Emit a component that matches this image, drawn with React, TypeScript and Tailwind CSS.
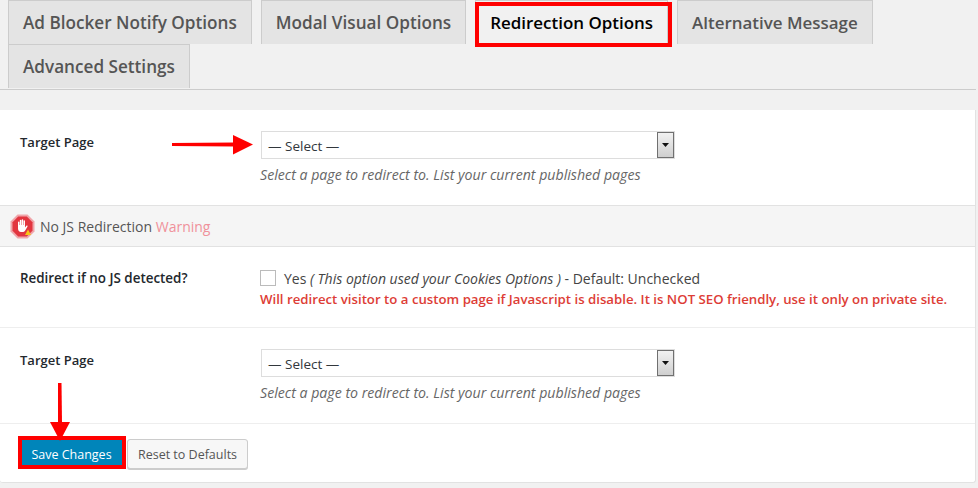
const SelectBox = () => (
  <div className="flex h-[28px] w-[414px] items-center justify-between border border-[#ddd] bg-white pl-[6px]">
    <span className="pt-[3px] text-[13.5px] text-[#32373c]">— Select —</span>
    <div className="flex h-[26px] w-[17px] items-center justify-center border border-[#707070] bg-gradient-to-b from-[#f2f2f2] to-[#cfcfcf]">
      <svg width="7" height="4" viewBox="0 0 7 4">
        <path d="M0 0h7L3.5 4z" fill="#111" />
      </svg>
    </div>
  </div>
);

const Tab = ({ label, className }: { label: string; className: string }) => (
  <div className={"ml-[9px] flex h-[44px] items-center border border-b-0 border-[#ccc] px-[14px] pt-[1px] font-semibold " + className}>
    {label}
  </div>
);

const StopIcon = () => (
  <svg width="25" height="25" viewBox="0 0 25 25">
    <path d="M7.500 0.500h10l7 7v10l-7 7h-10l-7-7v-10z" fill="#f0a5aa" />
    <path d="M8.200 2.500h8.600l5.700 5.700v8.600l-5.700 5.700H8.200l-5.700-5.700V8.200z" fill="#e2353f" />
    <path
      d="M8 12V8.200c0-1 1.400-1 1.400 0V11h.4V6.600c0-1 1.500-1 1.500 0V11h.4V6c0-1 1.500-1 1.500 0v5h.4V7c0-1 1.400-1 1.400 0v6.500l1.200-1.600c.7-.8 1.800 0 1.200.9l-2.200 3.600c-.7 1.100-1.500 1.700-3 1.700h-1.200C9.300 18.100 8 16.500 8 14.500z"
      fill="#fff"
    />
    <path d="M18 15.500l3 5.500h-6z" fill="#f5c518" />
  </svg>
);

export default function App() {
  return (
    <div className="relative h-[488px] w-[978px] overflow-hidden bg-[#f1f1f1] font-['Open_Sans',sans-serif] text-[14px] text-[#444]">
      {/* tabs */}
      <div className="mr-[2px] h-[90px] border-b border-[#ccc]">
        <div className="-ml-px flex h-[44px]">
          <Tab label="Ad Blocker Notify Options" className="bg-[#e4e4e4] text-[17.15px] text-[#555]" />
          <Tab label="Modal Visual Options" className="bg-[#e4e4e4] text-[17.15px] text-[#555]" />
          <Tab label="Redirection Options" className="bg-[#f1f1f1] text-[16.95px] text-black" />
          <Tab label="Alternative Message" className="bg-[#e4e4e4] text-[16.95px] text-[#555]" />
        </div>
        <div className="-ml-px flex h-[45px]">
          <Tab label="Advanced Settings" className="bg-[#e4e4e4] text-[17.15px] text-[#555]" />
        </div>
      </div>

      {/* panel */}
      <div className="mr-[2px] mt-[20px] rounded-b-[3px] border-b border-r border-[#e2e2e2] bg-white">
        <div className="flex h-[95px] pl-[20px] pt-[21px]">
          <div className="w-[241px] pt-[2px] text-[13px] font-semibold leading-[18px] text-[#23282d]">Target Page</div>
          <div>
            <SelectBox />
            <p className="-ml-px mt-[6px] text-[14.15px] italic leading-[20px] text-[#666]">
              Select a page to redirect to. List your current published pages
            </p>
          </div>
        </div>

        <div className="flex h-[42px] items-center gap-[5px] border-y border-[#e2e2e2] bg-[#f5f5f5] pl-[10px] text-[#555]">
          <StopIcon />
          <span className="pt-[1px]">
            No JS Redirection <span className="text-[#f0919a]">Warning</span>
          </span>
        </div>

        <div className="flex h-[80px] pl-[20px] pt-[21px]">
          <div className="w-[240px] text-[13.4px] font-semibold leading-[20px] text-[#23282d]">Redirect if no JS detected?</div>
          <div>
            <div className="flex h-[20px] items-center">
              <div className="h-[16px] w-[16px] border border-[#bbb] bg-white" />
              <span className="ml-[8px] text-[#444]">
                Yes <em>( This option used your Cookies Options )</em> - Default: Unchecked
              </span>
            </div>
            <p className="text-[13.23px] font-semibold leading-[22px] text-[#dd3d36]">
              Will redirect visitor to a custom page if Javascript is disable. It is NOT SEO friendly, use it only on private site.
            </p>
          </div>
        </div>

        <div className="flex h-[96px] border-t border-[#eee] pl-[20px] pt-[21px]">
          <div className="w-[241px] pt-[2px] text-[13px] font-semibold leading-[18px] text-[#23282d]">Target Page</div>
          <div>
            <SelectBox />
            <p className="-ml-px mt-[6px] text-[14.15px] italic leading-[20px] text-[#666]">
              Select a page to redirect to. List your current published pages
            </p>
          </div>
        </div>

        <div className="flex h-[59px] gap-[5px] border-t border-[#eee] pl-[22px] pt-[16px]">
          <button className="h-[25px] w-[100px] bg-[#0085ba] pr-[1px] pt-[5px] text-[12.5px] text-white">Save Changes</button>
          <button className="h-[30px] w-[121px] -translate-y-px rounded-[3px] border border-[#ccc] bg-[#f7f7f7] pt-[2px] text-[12.5px] text-[#555] shadow-[0_1px_0_#ccc]">
            Reset to Defaults
          </button>
        </div>
      </div>

      {/* annotations drawn over the screenshot */}
      <div className="absolute left-[475px] top-[2px] h-[45px] w-[197px] border-[4px] border-[#ff0000]" />
      <div className="absolute left-[18px] top-[436px] h-[33px] w-[108px] border-[4px] border-[#ff0000]" />
      <svg className="absolute left-0 top-0" width="978" height="488" viewBox="0 0 978 488">
        <path d="M172 143l62-.5v4l-62-.5z" fill="#ff0000" />
        <path d="M233 135l20 9.500-20 10z" fill="#ff0000" />
        <path d="M58 383h3.500l.5 40h-4z" fill="#ff0000" />
        <path d="M50 422h20l-10 19z" fill="#ff0000" />
      </svg>
    </div>
  );
}
